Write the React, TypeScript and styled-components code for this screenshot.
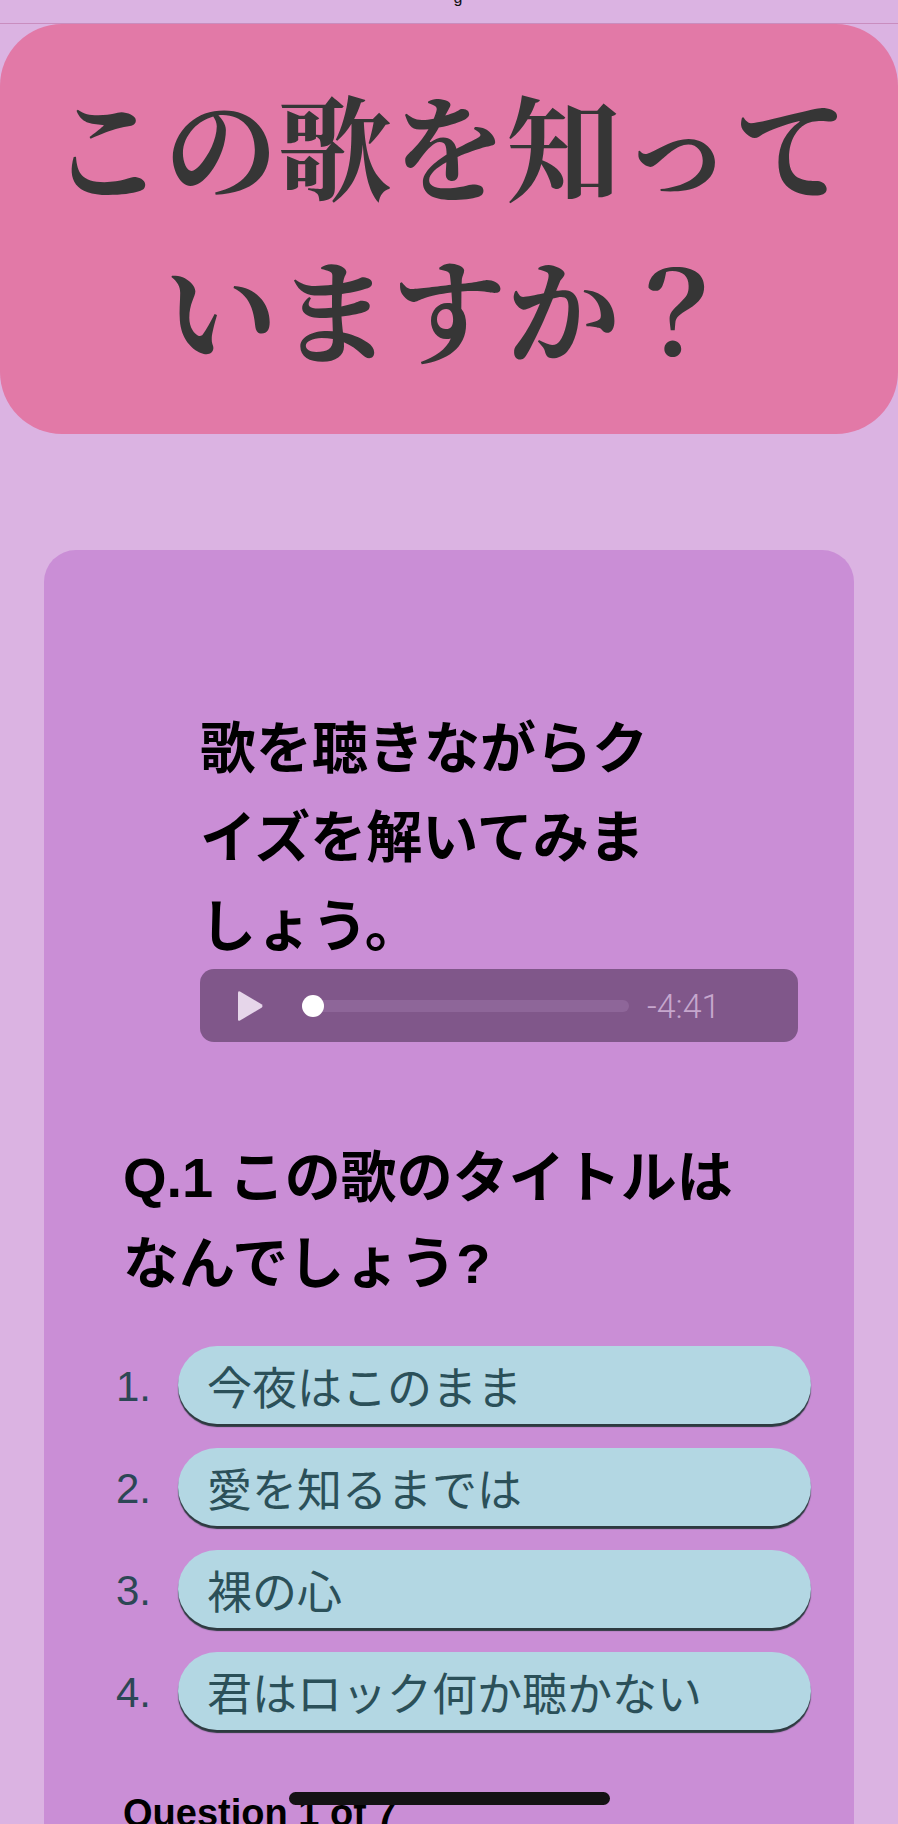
import React from "react";
import styled, { createGlobalStyle } from "styled-components";

const GlobalStyle = createGlobalStyle`
  html, body {
    margin: 0;
    padding: 0;
    background: #dbb3e2;
  }
  body {
    font-family: "Liberation Sans", "Noto Sans CJK JP", sans-serif;
  }
  * { box-sizing: border-box; }
`;

const Page = styled.div`
  display: flex;
  flex-direction: column;
  min-height: 100vh;
  background: #dbb3e2;
`;

const TopBar = styled.div`
  height: 24px;
  border-bottom: 1px solid #c98dbf;
  overflow: hidden;
  display: flex;
  justify-content: center;
  padding-left: 18px;
`;

const TopBarText = styled.span`
  font-family: "Liberation Sans", sans-serif;
  font-size: 16px;
  line-height: 16px;
  margin-top: -10px;
  color: #111;
`;

const Hero = styled.header`
  background: #e279a7;
  border-radius: 62px;
  padding: 38px 36px 46px;
  text-align: center;
`;

const HeroTitle = styled.h1`
  margin: 0;
  font-family: "Noto Serif CJK JP", "Noto Sans CJK JP", serif;
  font-weight: 700;
  font-size: 114px;
  line-height: 163px;
  color: #363636;
`;

const Card = styled.main`
  margin: 116px 44px 0;
  background: #ca8ed6;
  border-radius: 32px;
  padding: 154px 43px 90px 72px;
  display: flex;
  flex-direction: column;
`;

const Intro = styled.section`
  margin-left: 84px;
  width: 598px;
  display: flex;
  flex-direction: column;
`;

const IntroText = styled.p`
  margin: 0;
  max-width: 480px;
  font-family: "Liberation Sans", "Noto Sans CJK JP", sans-serif;
  font-weight: 700;
  font-size: 56px;
  line-height: 89px;
  color: #000;
`;

const AudioBar = styled.div`
  height: 73px;
  margin-top: -2px;
  border-radius: 14px;
  background: #80578a;
  display: flex;
  align-items: center;
  padding-left: 37px;
`;

const PlayIcon = styled.svg`
  width: 27px;
  height: 34px;
  flex: none;
`;

const Track = styled.div`
  position: relative;
  margin-left: 38px;
  width: 327px;
  height: 12px;
  border-radius: 6px;
  background: #8e6699;
`;

const Thumb = styled.span`
  position: absolute;
  left: 0;
  top: 50%;
  width: 22px;
  height: 22px;
  margin-top: -11px;
  border-radius: 50%;
  background: #ffffff;
`;

const Time = styled.span`
  margin-left: 18px;
  font-family: Roboto, "Liberation Sans", sans-serif;
  font-weight: 300;
  font-size: 34px;
  color: #c6a7cd;
`;

const Question = styled.h2`
  margin: 93px 0 39px 7px;
  max-width: 640px;
  font-family: "Liberation Sans", "Noto Sans CJK JP", sans-serif;
  font-weight: 700;
  font-size: 56px;
  line-height: 86px;
  color: #000;
`;

const Options = styled.ol`
  list-style: none;
  margin: 0;
  padding: 0;
  display: flex;
  flex-direction: column;
  gap: 24px;
`;

const OptionRow = styled.li`
  display: flex;
  align-items: center;
`;

const OptionNum = styled.span`
  width: 62px;
  flex: none;
  padding-top: 4px;
  font-family: "Liberation Sans", sans-serif;
  font-size: 42px;
  color: #2c4755;
`;

const Pill = styled.button`
  flex: 1;
  height: 78px;
  border: none;
  border-radius: 39px;
  background: #b3d7e3;
  box-shadow: 0 3px 1px #2d3a40;
  padding: 0 0 0 29px;
  display: flex;
  align-items: center;
  font-family: "Noto Sans CJK JP", sans-serif;
  font-weight: 400;
  font-size: 45px;
  color: #2b5059;
  text-align: left;
  cursor: pointer;
`;

const Progress = styled.p`
  margin: 62px 0 0 7px;
  font-family: "Liberation Sans", sans-serif;
  font-weight: 700;
  font-size: 38px;
  color: #000;
`;

const HomeIndicator = styled.div`
  position: fixed;
  left: 50%;
  bottom: 19px;
  width: 321px;
  height: 13px;
  margin-left: -160px;
  border-radius: 7px;
  background: #141214;
`;

const options = ["今夜はこのまま", "愛を知るまでは", "裸の心", "君はロック何か聴かない"];

export default function App() {
  return (
    <Page>
      <GlobalStyle />
      <TopBar>
        <TopBarText>g</TopBarText>
      </TopBar>
      <Hero>
        <HeroTitle>この歌を知っていますか？</HeroTitle>
      </Hero>
      <Card>
        <Intro>
          <IntroText>歌を聴きながらクイズを解いてみましょう。</IntroText>
          <AudioBar>
            <PlayIcon viewBox="0 0 27 34">
              <path
                d="M3 2.5 L24.5 15.2 Q26.5 17 24.5 18.8 L3 31.5 Q1 32.6 1 30.3 L1 3.7 Q1 1.4 3 2.5 Z"
                fill="#e6d6ea"
              />
            </PlayIcon>
            <Track>
              <Thumb />
            </Track>
            <Time>-4:41</Time>
          </AudioBar>
        </Intro>
        <Question>Q.1 この歌のタイトルはなんでしょう?</Question>
        <Options>
          {options.map((o, i) => (
            <OptionRow key={o}>
              <OptionNum>{i + 1}.</OptionNum>
              <Pill type="button">{o}</Pill>
            </OptionRow>
          ))}
        </Options>
        <Progress>Question 1 of 7</Progress>
      </Card>
      <HomeIndicator />
    </Page>
  );
}
